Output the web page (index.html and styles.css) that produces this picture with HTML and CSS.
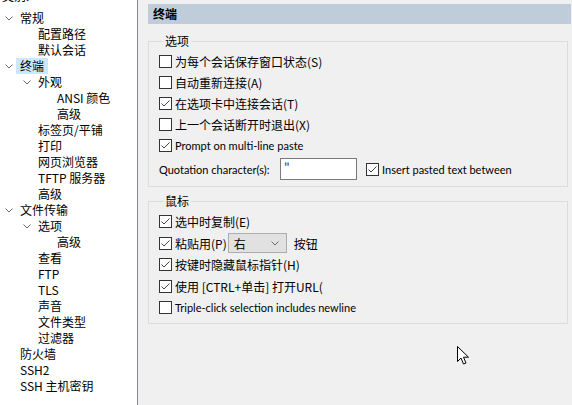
FILE: index.html
```html
<!DOCTYPE html>
<html lang="zh">
<head>
<meta charset="utf-8">
<title>终端</title>
<link rel="stylesheet" href="styles.css">
</head>
<body>
<div class="win">
  <nav class="tree">
    <div class="cap">类别:</div>
    <div class="node l0"><span class="exp"><svg width="8" height="5" viewBox="0 0 8 5"><polyline points="0.5,0.5 4,4 7.5,0.5" /></svg></span><span class="lbl">常规</span></div>
    <div class="node l1"><span class="exp"></span><span class="lbl">配置路径</span></div>
    <div class="node l1"><span class="exp"></span><span class="lbl">默认会话</span></div>
    <div class="node l0"><span class="exp"><svg width="8" height="5" viewBox="0 0 8 5"><polyline points="0.5,0.5 4,4 7.5,0.5" /></svg></span><span class="lbl sel">终端</span></div>
    <div class="node l1"><span class="exp"><svg width="8" height="5" viewBox="0 0 8 5"><polyline points="0.5,0.5 4,4 7.5,0.5" /></svg></span><span class="lbl">外观</span></div>
    <div class="node l2"><span class="exp"></span><span class="lbl">ANSI 颜色</span></div>
    <div class="node l2"><span class="exp"></span><span class="lbl">高级</span></div>
    <div class="node l1"><span class="exp"></span><span class="lbl">标签页/平铺</span></div>
    <div class="node l1"><span class="exp"></span><span class="lbl">打印</span></div>
    <div class="node l1"><span class="exp"></span><span class="lbl">网页浏览器</span></div>
    <div class="node l1"><span class="exp"></span><span class="lbl">TFTP 服务器</span></div>
    <div class="node l1"><span class="exp"></span><span class="lbl">高级</span></div>
    <div class="node l0"><span class="exp"><svg width="8" height="5" viewBox="0 0 8 5"><polyline points="0.5,0.5 4,4 7.5,0.5" /></svg></span><span class="lbl">文件传输</span></div>
    <div class="node l1"><span class="exp"><svg width="8" height="5" viewBox="0 0 8 5"><polyline points="0.5,0.5 4,4 7.5,0.5" /></svg></span><span class="lbl">选项</span></div>
    <div class="node l2"><span class="exp"></span><span class="lbl">高级</span></div>
    <div class="node l1"><span class="exp"></span><span class="lbl">查看</span></div>
    <div class="node l1"><span class="exp"></span><span class="lbl">FTP</span></div>
    <div class="node l1"><span class="exp"></span><span class="lbl">TLS</span></div>
    <div class="node l1"><span class="exp"></span><span class="lbl">声音</span></div>
    <div class="node l1"><span class="exp"></span><span class="lbl">文件类型</span></div>
    <div class="node l1"><span class="exp"></span><span class="lbl">过滤器</span></div>
    <div class="node l0"><span class="exp"></span><span class="lbl">防火墙</span></div>
    <div class="node l0"><span class="exp"></span><span class="lbl">SSH2</span></div>
    <div class="node l0"><span class="exp"></span><span class="lbl">SSH 主机密钥</span></div>
  </nav>
  <main class="main">
    <div class="hdr">终端</div>
    <fieldset class="grp g1">
      <legend>选项</legend>
      <div class="row"><span class="cb"></span><span>为每个会话保存窗口状态(S)</span></div>
      <div class="row"><span class="cb"></span><span>自动重新连接(A)</span></div>
      <div class="row"><span class="cb on"><svg width="11" height="11" viewBox="0 0 11 11"><polyline points="1.5,5.5 4,8 9.5,2.5" /></svg></span><span>在选项卡中连接会话(T)</span></div>
      <div class="row"><span class="cb"></span><span>上一个会话断开时退出(X)</span></div>
      <div class="row"><span class="cb on"><svg width="11" height="11" viewBox="0 0 11 11"><polyline points="1.5,5.5 4,8 9.5,2.5" /></svg></span><span class="en">Prompt on multi-line paste</span></div>
      <div class="row qrow">
        <span class="qlabel en">Quotation character(s):</span>
        <span class="input">"</span>
        <span class="cb on"><svg width="11" height="11" viewBox="0 0 11 11"><polyline points="1.5,5.5 4,8 9.5,2.5" /></svg></span><span class="en">Insert pasted text between</span>
      </div>
    </fieldset>
    <fieldset class="grp g2">
      <legend>鼠标</legend>
      <div class="row"><span class="cb on"><svg width="11" height="11" viewBox="0 0 11 11"><polyline points="1.5,5.5 4,8 9.5,2.5" /></svg></span><span>选中时复制(E)</span></div>
      <div class="row tall"><span class="cb on"><svg width="11" height="11" viewBox="0 0 11 11"><polyline points="1.5,5.5 4,8 9.5,2.5" /></svg></span><span>粘贴用(P)</span>
        <span class="combo"><span>右</span><svg width="8" height="5" viewBox="0 0 8 5"><polyline points="0.5,0.5 4,4 7.5,0.5" /></svg></span>
        <span class="after">按钮</span>
      </div>
      <div class="row"><span class="cb on"><svg width="11" height="11" viewBox="0 0 11 11"><polyline points="1.5,5.5 4,8 9.5,2.5" /></svg></span><span>按键时隐藏鼠标指针(H)</span></div>
      <div class="row tall"><span class="cb on"><svg width="11" height="11" viewBox="0 0 11 11"><polyline points="1.5,5.5 4,8 9.5,2.5" /></svg></span><span>使用 [CTRL+单击] 打开URL(</span></div>
      <div class="row"><span class="cb"></span><span class="en">Triple-click selection includes newline</span></div>
    </fieldset>
  </main>
  <svg class="cursor" width="13" height="20" viewBox="0 0 13 20"><path d="M0.5,0.5 L0.5,15.5 L4,12 L6.5,18 L9,17 L6.5,11.2 L11.5,11.2 Z" /></svg>
</div>
</body>
</html>
```

FILE: styles.css
```css
* { box-sizing: border-box; }
html, body { margin: 0; padding: 0; }
body {
  width: 572px;
  height: 405px;
  overflow: hidden;
  background: #f0f0f0;
  font-family: "Noto Sans CJK SC", "Noto Sans", sans-serif;
  font-size: 12px;
  color: #000;
}
.win {
  position: relative;
  display: flex;
  width: 572px;
  height: 405px;
}
.tree {
  width: 138px;
  flex: none;
  background: #fff;
  border-right: 1px solid #828790;
  overflow: hidden;
  padding-top: 10px;
}
.cap {
  height: 16px;
  line-height: 16px;
  margin-top: -22px;
  margin-bottom: 6px;
  padding-left: 2px;
}
.node {
  display: flex;
  align-items: center;
  height: 16px;
  line-height: 16px;
  white-space: nowrap;
}
.node.l0 { padding-left: 5px; }
.node.l1 { padding-left: 23px; }
.node.l2 { padding-left: 42px; }
.exp {
  width: 15px;
  flex: none;
  display: flex;
  align-items: center;
}
.exp svg, .combo svg {
  fill: none;
  stroke: #6a6a6a;
  stroke-width: 1;
}
.lbl.sel {
  background: #cce8ff;
  padding: 0 4px;
  margin-left: -4px;
}
.main {
  flex: 1;
  padding: 4px 1px 0 10px;
  display: flex;
  flex-direction: column;
}
.hdr {
  height: 20px;
  line-height: 20px;
  background: #bfcddb;
  font-weight: bold;
  padding-left: 5px;
}
.grp {
  margin: 9px 3px 0 0;
  padding: 2px 9px 4px 10px;
  border: 1px solid #dcdcdc;
  min-width: 0;
}
.grp legend {
  padding: 0 2px;
  margin-left: 4px;
  line-height: 16px;
  height: 16px;
}
.g2 { margin-top: 6px; padding-bottom: 5px; }
.row {
  display: flex;
  align-items: center;
  height: 21px;
  white-space: nowrap;
}
.row.tall { height: 22px; }
.en {
  font-family: Lato, "Noto Sans CJK SC", sans-serif;
  font-size: 11px;
}
.cb {
  width: 13px;
  height: 13px;
  flex: none;
  border: 1px solid #333;
  background: #fff;
  margin-right: 3px;
  display: flex;
  align-items: center;
  justify-content: center;
}
.cb svg {
  fill: none;
  stroke: #444;
  stroke-width: 1;
}
.qrow { height: 26px; }
.qlabel { width: 121px; flex: none; }
.input {
  width: 77px;
  height: 22px;
  flex: none;
  background: #fff;
  border: 1px solid #7a7a7a;
  padding-left: 3px;
  line-height: 18px;
  color: #1b2f6b;
  margin-right: 9px;
}
.combo {
  width: 59px;
  height: 20px;
  flex: none;
  margin-left: 1px;
  background: #e1e1e1;
  border: 1px solid #adadad;
  display: flex;
  align-items: center;
  justify-content: space-between;
  padding: 0 7px 0 5px;
}
.after { margin-left: 7px; }
.cursor {
  position: absolute;
  left: 457px;
  top: 346px;
  fill: #fff;
  stroke: #000;
  stroke-width: 1;
}
```
